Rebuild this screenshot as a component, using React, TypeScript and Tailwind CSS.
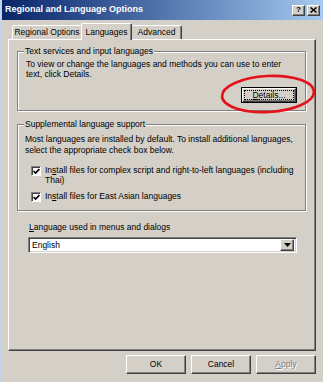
import React from 'react';

const raised =
  'border border-t-white border-l-white border-r-[#404040] border-b-[#404040] shadow-[inset_-1px_-1px_0_#808080]';

function Check() {
  return (
    <div className="w-[10px] h-[10px] shrink-0 bg-white border border-t-[#808080] border-l-[#808080] border-r-white border-b-white shadow-[inset_1px_1px_0_#404040] flex items-center justify-center">
      <svg width="7" height="7" viewBox="0 0 7 7">
        <polyline points="0.6,3 2.6,5 6.4,1.2" fill="none" stroke="#000" strokeWidth="1.7" />
      </svg>
    </div>
  );
}

function DialogButton({ children, disabled }: { children: React.ReactNode; disabled?: boolean }) {
  return (
    <div
      className={`w-[60px] h-[19px] flex items-center justify-center bg-[#d4d0c8] ${raised} ${
        disabled ? 'text-[#808080] [text-shadow:1px_1px_0_#fff]' : 'text-black'
      }`}
    >
      {children}
    </div>
  );
}

export default function App() {
  return (
    <div className="relative w-[331px] h-[387px] bg-white font-['Liberation_Sans',Arial,sans-serif] text-[8.5px] text-black whitespace-nowrap">
      <div className="w-[323px] h-[382px] bg-[#d4d0c8] border-l-2 border-l-[#c3d3ea] flex flex-col">
        {/* title bar */}
        <div className="h-[20px] bg-linear-to-r from-[#0a246a] to-[#a6caf0] flex items-center justify-between pl-[3px] pr-[3px]">
          <span className="text-white font-bold text-[9px]">Regional and Language Options</span>
          <div className="flex gap-[2px]">
            <div className={`w-[13px] h-[11px] bg-[#d4d0c8] ${raised} flex items-center justify-center font-bold text-[8px] leading-none`}>?</div>
            <div className={`w-[13px] h-[11px] bg-[#d4d0c8] ${raised} flex items-center justify-center`}>
              <svg width="7" height="6" viewBox="0 0 7 6">
                <path d="M0.5 0.5 L6.5 5.5 M6.5 0.5 L0.5 5.5" stroke="#000" strokeWidth="1.5" />
              </svg>
            </div>
          </div>
        </div>

        <div className="flex-1 flex flex-col pl-[6px] pr-[7px]">
          {/* tabs */}
          <div className="mt-[3px] h-[16px] flex items-end pl-[4px] relative z-10">
            <div className="w-[70px] h-[14px] border-t border-l border-t-white border-l-white border-r border-r-[#404040] rounded-t-[2px] flex items-center justify-center">
              Regional Options
            </div>
            <div className="w-[51px] h-[17px] -mb-[1px] -ml-[1px] bg-[#d4d0c8] border-t border-l border-t-white border-l-white border-r border-r-[#404040] shadow-[inset_-1px_0_0_#808080] rounded-t-[2px] flex items-start justify-center pt-[2px]">
              Languages
            </div>
            <div className="w-[50px] h-[14px] border-t border-r border-t-white border-r-[#404040] shadow-[inset_-1px_0_0_#808080] rounded-t-[2px] flex items-center justify-center">
              Advanced
            </div>
          </div>

          {/* panel */}
          <div className={`h-[312px] flex flex-col pl-[8px] pr-[9px] ${raised}`}>
            {/* group 1 */}
            <div className="mt-[11px] border border-[#808080] shadow-[inset_1px_1px_0_#fff,1px_1px_0_#fff] pl-[8px] pr-[8px] pb-[7px]">
              <div className="-mt-[6px] -ml-[2px] w-fit bg-[#d4d0c8] px-[1px] leading-[11px]">
                Text services and input languages
              </div>
              <p className="mt-[2px] leading-[10px]">
                To view or change the languages and methods you can use to enter
                <br />
                text, click Details.
              </p>
              <div className="mt-[8px] flex justify-end">
                <div className="w-[56px] h-[16px] border border-black">
                  <div className={`w-full h-full ${raised} p-[1px]`}>
                    <div className="w-full h-full border border-dotted border-black flex items-center justify-center leading-none">
                      <span>
                        <span className="underline">D</span>etails...
                      </span>
                    </div>
                  </div>
                </div>
              </div>
            </div>

            {/* group 2 */}
            <div className="mt-[13px] border border-[#808080] shadow-[inset_1px_1px_0_#fff,1px_1px_0_#fff] pl-[8px] pr-[6px] pb-[8px]">
              <div className="-mt-[6px] -ml-[2px] w-fit bg-[#d4d0c8] px-[1px] leading-[11px]">
                Supplemental language support
              </div>
              <p className="mt-[4px] -ml-[1px] leading-[11px]">
                Most languages are installed by default. To install additional languages,
                <br />
                select the appropriate check box below.
              </p>
              <div className="mt-[9px] ml-[5px] flex gap-[4px] items-start">
                <div className="mt-[1px]">
                  <Check />
                </div>
                <span className="leading-[10px]">
                  In<span className="underline">s</span>tall files for complex script and right-to-left languages (including
                  <br />
                  Thai)
                </span>
              </div>
              <div className="mt-[6px] ml-[5px] flex gap-[4px] items-start">
                <div className="mt-[1px]">
                  <Check />
                </div>
                <span className="leading-[10px]">
                  In<span className="underline">s</span>tall files for East Asian languages
                </span>
              </div>
            </div>

            {/* language select */}
            <div className="mt-[11px] pl-[11px]">
              <div className="pl-[1px] leading-[11px]">
                <span className="underline">L</span>anguage used in menus and dialogs
              </div>
              <div className="mt-[4px] w-[269px] h-[16px] bg-white border border-t-[#808080] border-l-[#808080] border-r-white border-b-white shadow-[inset_1px_1px_0_#404040,inset_-1px_-1px_0_#d4d0c8] flex items-center pl-[3px] pr-[2px]">
                <span className="flex-1">English</span>
                <div className={`w-[14px] h-[12px] bg-[#d4d0c8] ${raised} flex items-center justify-center`}>
                  <svg width="7" height="4" viewBox="0 0 7 4">
                    <path d="M0 0 H7 L3.5 4 Z" fill="#000" />
                  </svg>
                </div>
              </div>
            </div>
          </div>

          {/* buttons */}
          <div className="mt-[4px] flex justify-end gap-[5px]">
            <DialogButton>OK</DialogButton>
            <DialogButton>Cancel</DialogButton>
            <DialogButton disabled>
              <span>
                <span className="underline">A</span>pply
              </span>
            </DialogButton>
          </div>
        </div>
      </div>

      {/* red annotation ellipse */}
      <svg className="absolute left-[219px] top-[73px]" width="98" height="42" viewBox="0 0 98 42">
        <ellipse cx="49" cy="21" rx="46" ry="18" fill="none" stroke="#e3121b" strokeWidth="2.6" transform="rotate(-3 49 21)" />
      </svg>
    </div>
  );
}
